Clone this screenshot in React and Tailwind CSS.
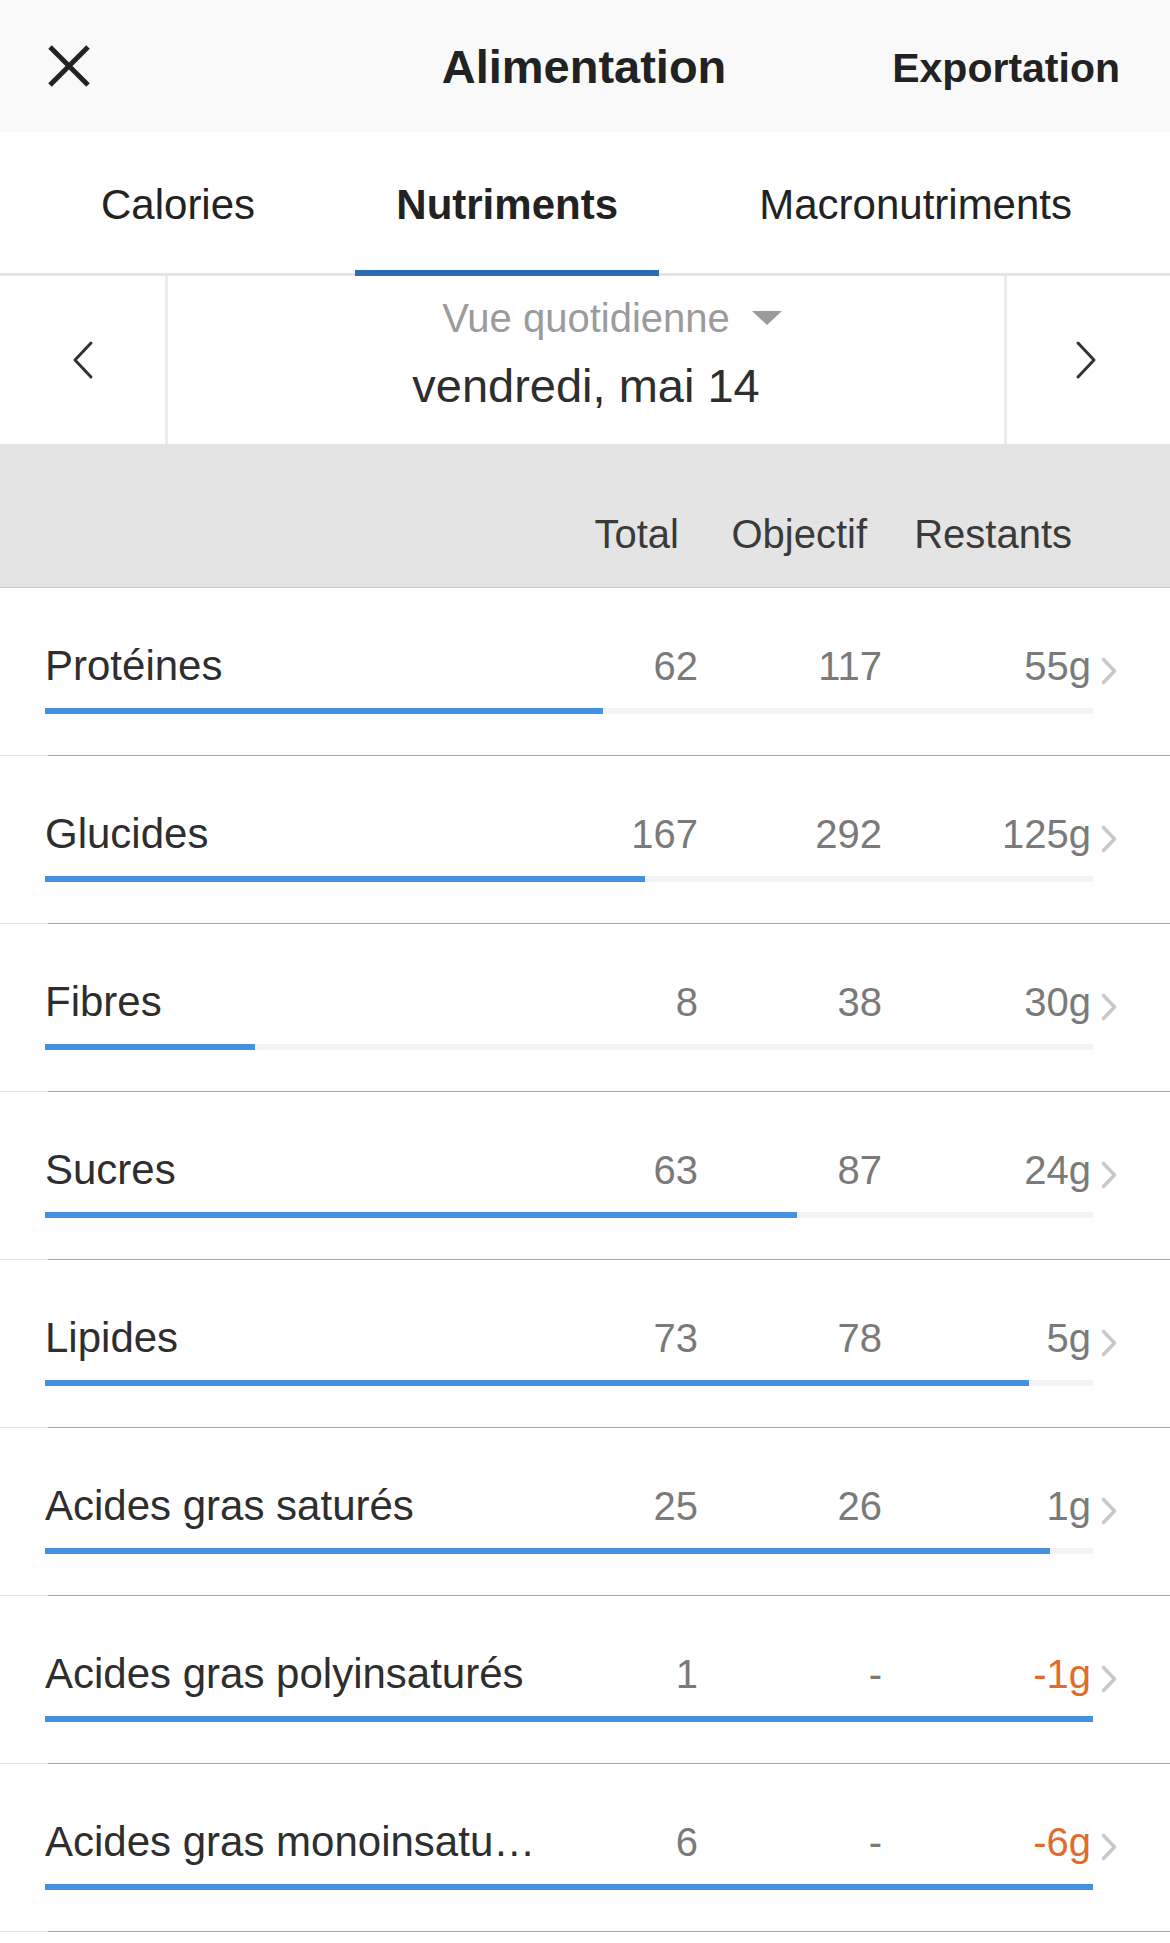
import React from "react";

const rows = [
  { name: "Protéines", total: "62", goal: "117", left: "55g", pct: 0.532 },
  { name: "Glucides", total: "167", goal: "292", left: "125g", pct: 0.5725 },
  { name: "Fibres", total: "8", goal: "38", left: "30g", pct: 0.2 },
  { name: "Sucres", total: "63", goal: "87", left: "24g", pct: 0.718 },
  { name: "Lipides", total: "73", goal: "78", left: "5g", pct: 0.939 },
  { name: "Acides gras saturés", total: "25", goal: "26", left: "1g", pct: 0.959 },
  { name: "Acides gras polyinsaturés", total: "1", goal: "-", left: "-1g", pct: 1, neg: true },
  { name: "Acides gras monoinsaturés", total: "6", goal: "-", left: "-6g", pct: 1, neg: true },
];

function Chevron({ dir = "right", color = "#333", w = 20, h = 38, sw = 3 }) {
  const pts =
    dir === "right"
      ? `${sw},${sw} ${w - sw},${h / 2} ${sw},${h - sw}`
      : `${w - sw},${sw} ${sw},${h / 2} ${w - sw},${h - sw}`;
  return (
    <svg width={w} height={h} viewBox={`0 0 ${w} ${h}`} fill="none">
      <polyline points={pts} stroke={color} strokeWidth={sw} strokeLinecap="round" strokeLinejoin="round" />
    </svg>
  );
}

function Row({ r }) {
  return (
    <div className="h-[168px] flex flex-col">
      <div className="mt-[52px] flex items-center h-[52px] pl-[45px] pr-[52px]">
        <div className="flex-1 min-w-0">
          <div className="max-w-[495px] truncate text-[42px] leading-[52px] text-[#2e2e2e]">{r.name}</div>
        </div>
        <div className="w-[150px] text-right text-[40px] leading-[52px] text-[#7a7a7a]">{r.total}</div>
        <div className="w-[184px] text-right text-[40px] leading-[52px] text-[#7a7a7a]">{r.goal}</div>
        <div
          className={
            r.neg
              ? "w-[209px] text-right text-[40px] leading-[52px] text-[#e06c2b]"
              : "w-[209px] text-right text-[40px] leading-[52px] text-[#7a7a7a]"
          }
        >
          {r.left}
        </div>
        <div className="ml-[9px] w-[18px] mt-[10px] flex items-center">
          <Chevron dir="right" color="#c8c8cc" w={18} h={30} sw={3.5} />
        </div>
      </div>
      <div className="ml-[45px] mt-[16px] w-[1048px] h-[6px] bg-[#f2f2f7] flex">
        <div className="h-full bg-[#4590e1]" style={{ width: `${Math.min(1, r.pct) * 100}%` }} />
      </div>
      <div className="mt-auto flex h-px">
        <div className="w-[48px] h-px bg-[#e6e6e6]" />
        <div className="flex-1 h-px bg-[#a9a9a9]" />
      </div>
    </div>
  );
}

export default function App() {
  return (
    <div className="w-[1170px] min-h-[1943px] bg-white font-['Liberation_Sans',Arial,sans-serif]">
      {/* Top bar */}
      <div className="h-[132px] bg-[#f9f9f9] flex items-center pl-[47px] pr-[50px]">
        <div className="w-[301px] flex items-center">
          <svg width="44" height="44" viewBox="0 0 44 44">
            <line x1="3" y1="3" x2="41" y2="41" stroke="#222" strokeWidth="5" />
            <line x1="41" y1="3" x2="3" y2="41" stroke="#222" strokeWidth="5" />
          </svg>
        </div>
        <div className="flex-1 text-center text-[47px] leading-none font-bold text-[#222]">Alimentation</div>
        <div className="w-[300px] text-right text-[41px] leading-none font-bold text-[#222] pt-[5px]">Exportation</div>
      </div>

      {/* Tabs */}
      <div className="h-[144px] border-b-[3px] border-[#e4e4e4] flex justify-between pl-[60px] pr-[57px] text-[42px] leading-none text-[#222]">
        <div className="h-full flex items-center px-[41px] pt-[5px]">Calories</div>
        <div className="relative h-full flex items-center px-[41px] pt-[5px] font-bold">
          Nutriments
          <span className="absolute left-0 right-0 bottom-[-3px] h-[6px] bg-[#2d6cb5]" />
        </div>
        <div className="h-full flex items-center px-[41px] pt-[5px]">Macronutriments</div>
      </div>

      {/* Date navigation */}
      <div className="h-[168px] flex">
        <div className="w-[168px] border-r-[3px] border-[#ebebeb] flex items-center justify-center">
          <Chevron dir="left" color="#333" w={22} h={40} sw={3} />
        </div>
        <div className="flex-1 flex flex-col items-center pt-[22px]">
          <div className="relative text-[40px] leading-[40px] text-[#9b9b9b]">
            Vue quotidienne
            <svg className="absolute left-[calc(100%+22px)] top-[13px]" width="30" height="14" viewBox="0 0 30 14">
              <polygon points="0,0 30,0 15,14" fill="#9b9b9b" />
            </svg>
          </div>
          <div className="mt-[24px] text-[47px] leading-[47px] text-[#2e2e2e]">vendredi, mai 14</div>
        </div>
        <div className="w-[166px] border-l-[3px] border-[#ebebeb] flex items-center justify-center pr-[6px]">
          <Chevron dir="right" color="#333" w={22} h={40} sw={3} />
        </div>
      </div>

      {/* Column headings */}
      <div className="h-[144px] bg-[#e4e4e4] border-b border-[#c8c8c8] flex justify-end pr-[98px] pt-[70px] text-[40px] leading-[40px] text-[#3a3a3a]">
        <div>Total</div>
        <div className="w-[188px] text-right">Objectif</div>
        <div className="w-[205px] text-right">Restants</div>
      </div>

      {/* Rows */}
      {rows.map((r) => (
        <Row key={r.name} r={r} />
      ))}
    </div>
  );
}
